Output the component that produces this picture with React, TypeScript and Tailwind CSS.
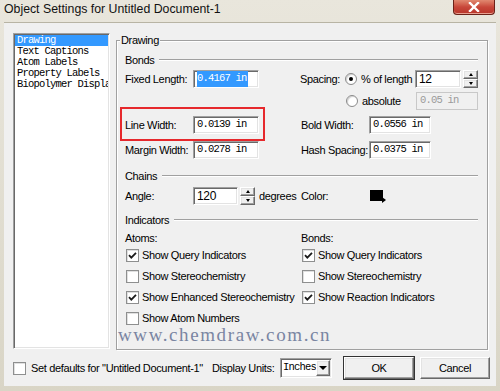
import React from 'react';

const sunken =
  'bg-white border border-t-[#a0a0a0] border-l-[#a0a0a0] border-r-white border-b-white shadow-[inset_1px_1px_0_#696969,inset_-1px_-1px_0_#e3e3e3]';
const raised =
  'bg-[#f0f0f0] border border-t-white border-l-white border-r-[#696969] border-b-[#696969] shadow-[inset_-1px_-1px_0_#a0a0a0,inset_1px_1px_0_#e3e3e3]';
const mono = "font-['Liberation_Mono',monospace] text-[10.5px] tracking-[-0.8px]";

const TextBox = ({ value, w, selected }: { value: string; w: string; selected?: boolean }) => (
  <div className={`${sunken} ${w} h-[18px] flex items-center pl-[3px] ${mono} text-black`}>
    <span className={selected ? 'bg-[#3399ff] text-white pr-[1px]' : ''}>{value}</span>
  </div>
);

const Spinner = () => (
  <div className="flex flex-col w-[15px] h-[18px]">
    <div className={`${raised} h-[9px] flex items-center justify-center`}>
      <div className="w-0 h-0 border-l-[2.5px] border-r-[2.5px] border-b-[3px] border-l-transparent border-r-transparent border-b-black" />
    </div>
    <div className={`${raised} h-[9px] flex items-center justify-center`}>
      <div className="w-0 h-0 border-l-[2.5px] border-r-[2.5px] border-t-[3px] border-l-transparent border-r-transparent border-t-black" />
    </div>
  </div>
);

const Radio = ({ checked }: { checked?: boolean }) => (
  <div className="w-[12px] h-[12px] shrink-0 rounded-full border border-[#8a8a8a] bg-white flex items-center justify-center shadow-[inset_1px_1px_1px_#d0d0d0]">
    {checked && <div className="w-[4px] h-[4px] rounded-full bg-black" />}
  </div>
);

const Check = ({ checked }: { checked?: boolean }) => (
  <div className="w-[13px] h-[13px] shrink-0 border border-[#8e8f8f] bg-white flex items-center justify-center shadow-[inset_1px_1px_0_#e0e0e0]">
    {checked && (
      <svg width="9" height="9" viewBox="0 0 9 9">
        <path d="M1 4.2 L3.3 6.6 L8 1.8" stroke="#1a1a1a" strokeWidth="1.8" fill="none" />
      </svg>
    )}
  </div>
);

const Header = ({ label }: { label: string }) => (
  <div className="flex items-center h-[16px]">
    <span>{label}</span>
    <div className="flex-1 ml-[5px] border-t border-t-[#a0a0a0] border-b border-b-white" />
  </div>
);

const CheckItem = ({ label, checked }: { label: string; checked?: boolean }) => (
  <div className="flex items-center h-[21px] pl-[1px] gap-[3px]">
    <Check checked={checked} />
    <span>{label}</span>
  </div>
);

export default function App() {
  const pages = ['Drawing', 'Text Captions', 'Atom Labels', 'Property Labels', 'Biopolymer Display'];

  return (
    <div className="w-[500px] h-[391px] relative flex flex-col whitespace-nowrap bg-gradient-to-b from-[#e9e6dc] to-[#d9d5c6] font-['Liberation_Sans',Arial,sans-serif] text-[11px] tracking-[-0.35px] text-black overflow-hidden">
      {/* title bar */}
      <div className="h-[22px] flex items-center pl-[4px] pb-[3px]">
        <span className="text-[12.3px] tracking-normal text-[#111]">Object Settings for Untitled Document-1</span>
      </div>
      <div className="absolute right-[5px] top-0 w-[42px] h-[15px] rounded-b-[4px] border border-t-0 border-[#6b2218] bg-gradient-to-b from-[#e08870] via-[#c8473a] to-[#b8352a] flex items-center justify-center shadow-[inset_0_-1px_0_#e8a090]">
        <svg width="12" height="10" viewBox="0 0 12 10">
          <path d="M2 1 L10 9 M10 1 L2 9" stroke="#fff" strokeWidth="2.4" strokeLinecap="square" />
        </svg>
      </div>

      {/* client area */}
      <div className="flex-1 mx-[4px] mb-[5px] bg-[#f0f0f0] border-t border-t-[#b8b4a4] flex flex-col pl-[9px] pt-[10px] relative">
        <div className="flex">
          {/* page list */}
          <div className={`${sunken} w-[97px] h-[316px] p-[1px] ${mono} text-black`}>
            {pages.map((p, i) => (
              <div
                key={p}
                className={`h-[11px] leading-[11px] pl-[2px] overflow-hidden ${
                  i === 0 ? 'bg-[#3399ff] text-white' : ''
                }`}
              >
                {p}
              </div>
            ))}
          </div>

          {/* Drawing group */}
          <div className="ml-[6px] mt-[7px] w-[372px] h-[310px] relative border border-[#a0a0a0] shadow-[1px_1px_0_#fff,inset_1px_1px_0_#fff]">
            <span className="absolute left-[3px] -top-[8px] px-[1px] bg-[#f0f0f0] leading-[14px]">Drawing</span>

            <div className="flex flex-col pl-[8px] pr-[9px] pt-[11px]">
              <Header label="Bonds" />

              {/* Fixed length / spacing */}
              <div className="flex items-center mt-[2px] h-[18px]">
                <div className="w-[176px] flex items-center">
                  <span className="w-[68px]">Fixed Length:</span>
                  <TextBox value="0.4167 in" w="w-[66px]" selected />
                </div>
                <div className="flex items-center">
                  <span className="w-[45px]">Spacing:</span>
                  <Radio checked />
                  <span className="w-[54px] ml-[4px]">% of length</span>
                  <div className={`${sunken} w-[46px] h-[18px] flex items-center pl-[3px] text-[12px]`}>12</div>
                  <div className="ml-[2px]">
                    <Spinner />
                  </div>
                </div>
              </div>

              {/* absolute */}
              <div className="flex items-center mt-[4px] h-[18px] pl-[221px]">
                <Radio />
                <span className="w-[54px] ml-[4px]">absolute</span>
                <div className={`w-[62px] h-[18px] border border-[#c8c8c8] bg-[#f0f0f0] flex items-center pl-[3px] ${mono} text-[#9a9a9a]`}>
                  0.05 in
                </div>
              </div>

              {/* line width / bold width */}
              <div className="flex items-center mt-[6px] h-[18px] relative">
                <div className="absolute -left-[5px] -top-[9px] w-[145px] h-[34px] border-2 border-[#e6282c]" />
                <div className="w-[176px] flex items-center">
                  <span className="w-[68px]">Line Width:</span>
                  <TextBox value="0.0139 in" w="w-[66px]" />
                </div>
                <span className="w-[68px]">Bold Width:</span>
                <TextBox value="0.0556 in" w="w-[62px]" />
              </div>

              {/* margin width / hash spacing */}
              <div className="flex items-center mt-[7px] h-[18px]">
                <div className="w-[176px] flex items-center">
                  <span className="w-[68px]">Margin Width:</span>
                  <TextBox value="0.0278 in" w="w-[66px]" />
                </div>
                <span className="w-[68px]">Hash Spacing:</span>
                <TextBox value="0.0375 in" w="w-[62px]" />
              </div>

              <div className="mt-[9px]">
                <Header label="Chains" />
              </div>

              {/* angle / color */}
              <div className="flex items-center mt-[3px] h-[18px]">
                <div className="w-[176px] flex items-center">
                  <span className="w-[68px]">Angle:</span>
                  <div className={`${sunken} w-[45px] h-[18px] flex items-center pl-[3px] text-[12px]`}>120</div>
                  <div className="ml-[2px]">
                    <Spinner />
                  </div>
                  <span className="ml-[4px]">degrees</span>
                </div>
                <span className="w-[69px]">Color:</span>
                <div className="relative w-[13px] h-[11px] bg-black -mt-[2px]">
                  <div className="absolute -right-[3px] -bottom-[2px] w-0 h-0 border-t-[3.5px] border-b-[3.5px] border-l-[4px] border-t-transparent border-b-transparent border-l-black" />
                </div>
              </div>

              <div className="mt-[7px]">
                <Header label="Indicators" />
              </div>

              <div className="flex mt-[3px]">
                <div className="w-[176px] flex flex-col">
                  <div className="h-[14px] leading-[14px]">Atoms:</div>
                  <CheckItem label="Show Query Indicators" checked />
                  <CheckItem label="Show Stereochemistry" />
                  <CheckItem label="Show Enhanced Stereochemistry" checked />
                  <CheckItem label="Show Atom Numbers" />
                </div>
                <div className="flex flex-col">
                  <div className="h-[14px] leading-[14px]">Bonds:</div>
                  <CheckItem label="Show Query Indicators" checked />
                  <CheckItem label="Show Stereochemistry" />
                  <CheckItem label="Show Reaction Indicators" checked />
                </div>
              </div>
            </div>
          </div>
        </div>

        {/* bottom row */}
        <div className="flex items-center h-[22px] mt-[7px]">
          <Check />
          <span className="ml-[5px] w-[181px]">Set defaults for "Untitled Document-1"</span>
          <span className="w-[68px]">Display Units:</span>
          <div className={`${sunken} w-[52px] h-[20px] flex items-center pl-[2px] pr-[1px]`}>
            <span className={`${mono} flex-1`}>Inches</span>
            <div className={`${raised} w-[15px] h-[16px] flex items-center justify-center`}>
              <div className="w-0 h-0 border-l-[4px] border-r-[4px] border-t-[4px] border-l-transparent border-r-transparent border-t-black" />
            </div>
          </div>
          <div className={`${raised} ml-[12px] w-[70px] h-[22px] flex items-center justify-center outline outline-1 outline-[#333]`}>
            OK
          </div>
          <div className={`${raised} ml-[6px] w-[70px] h-[22px] flex items-center justify-center`}>
            Cancel
          </div>
        </div>

        {/* watermark over the screenshot */}
        <div className="absolute left-[114px] top-[298px] font-['Liberation_Serif',serif] text-[19px] tracking-[1.6px] text-[#7a85a2] pointer-events-none">
          www.chemdraw.com.cn
        </div>
      </div>
    </div>
  );
}
